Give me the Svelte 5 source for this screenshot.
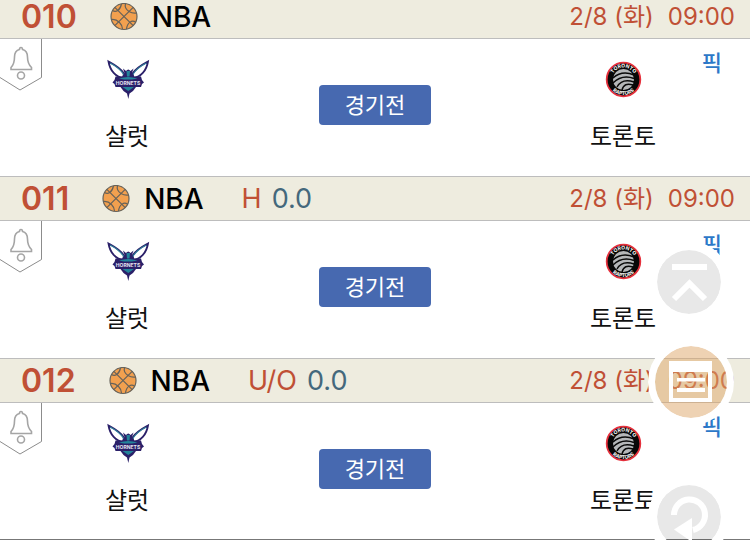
<script>
  const games = [
    { no: "010", type: "", line: "" },
    { no: "011", type: "H", line: "0.0" },
    { no: "012", type: "U/O", line: "0.0" },
  ];

  let alarms = $state({});

  const toggleAlarm = (no) => {
    alarms[no] = !alarms[no];
  };

  const scrollToTop = () => {
    window.scrollTo({ top: 0, behavior: "smooth" });
  };
</script>

<main class="games">
  {#each games as game (game.no)}
    <article class="game">
      <header class="bar">
        <span class="no">{game.no}</span>
        <svg class="ball" viewBox="0 0 28 28" aria-hidden="true">
          <circle cx="14" cy="13.500" r="13" />
          <path d="M4.800 4.300 23.200 22.700M23.200 4.300 4.800 22.700" />
          <path d="M15.500 .8C14.500 4 16 6.500 19 8.500C21.500 10 24 10.500 26.500 10" />
          <path d="M2.500 7.500C6 9.500 10 7.500 11.500 1" />
          <path d="M1.200 16.500C4 16 7 17 9.500 19.500C11.500 21.500 12.500 24 12.500 26" />
          <path d="M25.500 19C22 17 17.500 19 16.500 26" />
        </svg>
        <span class="league">NBA</span>
        {#if game.type}
          <span class="type">{game.type}</span>
          <span class="line">{game.line}</span>
        {/if}
        <time class="when"><span>2/8 (화)</span><span>09:00</span></time>
      </header>

      <div class="body">
        <button
          type="button"
          class="alarm"
          aria-label="알림"
          aria-pressed={!!alarms[game.no]}
          onclick={() => toggleAlarm(game.no)}
        >
          <svg viewBox="0 0 42 52" aria-hidden="true">
            <path class="tag" d="M41.500 0V38.500L20 51 0 38.500" />
            <path
              class="bell"
              d="M21 8.500C20 8.500 19.500 9.500 19.500 10.500C15.500 11.500 14.500 14.500 14.500 18C14.500 24 13.500 26 11 28.500V30.500H31.500V28.500C29 26 27.500 24 27.500 18C27.500 14.500 26.500 11.500 22.500 10.500C22.500 9.500 22 8.500 21 8.500Z"
            />
            <circle class="bell" cx="21" cy="36.500" r="3.500" />
          </svg>
        </button>

        <div class="team">
          <svg class="logo" viewBox="0 0 42 42" aria-hidden="true">
            <path class="wing" d="M2.500 3.500C8 6.500 14 9.500 18 15.500L17 20C10 19 4 13 2.500 3.500ZM42 3.500C36.500 6.500 30.500 9.500 26.500 15.500L27.500 20C34.500 19 40.500 13 42 3.500Z" />
            <path class="vein" d="M4 5C10 8 15 12 18 17M40.500 5C34.500 8 29.500 12 26.500 17" />
            <path class="navy" d="M17 10.500 20 13Q22.300 10 24.500 13L27.500 10.500 26 15 28 18.500H35L36 22 38 24.500 36 26 35 29H30L27 33 23.500 35.500 22.300 41 21 35.500 17.500 33 14.500 29H9.500L8.500 26 6.500 24.500 8.500 22 9.500 18.500H16.500L18.500 15Z" />
            <path class="teal" d="M20.500 13H24L23.500 18.500H21ZM13 20.500Q22 17.500 31.500 20.500L26 21.500H18ZM16.500 29H28L22.300 33Z" />
            <text class="hornets" x="22" y="27" text-anchor="middle">HORNETS</text>
          </svg>
          <span>샬럿</span>
        </div>

        <div class="state"><span>경기전</span></div>

        <div class="team">
          <svg class="logo" viewBox="0 0 42 42" aria-hidden="true">
            <defs>
              <path id="top-{game.no}" d="M9.500 21.500A12 12 0 0 1 33.500 21.500" />
              <path id="bottom-{game.no}" d="M6 21.500A15.500 15.500 0 0 0 37 21.500" />
            </defs>
            <circle cx="21.500" cy="21.500" r="16.800" fill="#080808" stroke="#e5303c" stroke-width="1.800" />
            <circle cx="21.500" cy="21.500" r="10.500" fill="#b5b7b9" />
            <path
              d="M11 20Q20 12 32 17M11 25Q20 16 32 20.500M15 29Q20 20 32 24M20 32Q22 24 31 27"
              fill="none"
              stroke="#080808"
              stroke-width="1.400"
            />
            <text class="raptors"><textPath href="#top-{game.no}" startOffset="50%" text-anchor="middle">TORONTO</textPath></text>
            <text class="raptors"><textPath href="#bottom-{game.no}" startOffset="50%" text-anchor="middle">RAPTORS</textPath></text>
          </svg>
          <span>토론토</span>
        </div>

        <a class="pick" href="#pick-{game.no}">픽</a>
      </div>
    </article>
  {/each}
</main>

<nav class="floating">
  <button type="button" class="round" aria-label="맨 위로" onclick={scrollToTop}>
    <svg viewBox="1 1 64 64" aria-hidden="true">
      <path d="M16 18H51" />
      <path d="M18 50 33.500 34.500 49 50" />
    </svg>
  </button>
  <button type="button" class="round menu" aria-label="메뉴">
    <svg viewBox="0 0 72 72" aria-hidden="true">
      <path class="fill" fill-rule="evenodd" d="M14 15H57V56H14ZM18 26V52H53V26Z" />
      <path class="fill" d="M22 32H50V35.500H22ZM22 42H50V46H22Z" />
    </svg>
  </button>
  <button type="button" class="round refresh" aria-label="새로고침">
    <svg viewBox="1 1 64 64" aria-hidden="true">
      <path d="M18 31A15.500 15.500 0 1 1 37 46" />
      <path class="fill" d="M36 34V58L18 45.500Z" />
    </svg>
  </button>
</nav>

<style>
  :global(body) {
    margin: 0;
    background: #fff;
    overflow: hidden;
    font-family: Inter, "Noto Sans CJK KR", sans-serif;
  }

  .games {
    margin-top: -6px;
    border-bottom: 1px solid #777;
  }

  .bar {
    display: flex;
    align-items: center;
    box-sizing: border-box;
    height: 45px;
    padding: 0 15px 0 21px;
    border-top: 1px solid #bdbdbd;
    border-bottom: 1px solid #bdbdbd;
    background: #eeecdf;
    line-height: 30px;
    white-space: nowrap;
  }

  .no {
    color: #c05035;
    font-size: 32px;
    font-weight: 600;
  }

  .ball {
    width: 28px;
    height: 28px;
    margin: 0 14px 0 33px;
    fill: none;
    stroke: #66625a;
    stroke-width: 1.2;
  }

  .ball circle {
    fill: #f2a04f;
  }

  .league {
    color: #000;
    font-size: 28px;
    font-weight: 500;
  }

  .type {
    margin: 0 10px 0 38px;
    color: #c05035;
    font-size: 27px;
  }

  .line {
    color: #44687c;
    font-size: 27px;
  }

  .when {
    display: flex;
    gap: 14px;
    margin-left: auto;
    color: #c05035;
    font-size: 24px;
  }

  .body {
    position: relative;
    display: grid;
    grid-template-columns: repeat(3, 1fr);
    box-sizing: border-box;
    height: 137px;
    padding: 0 3px;
  }

  .game:last-child .body {
    height: 136px;
  }

  .alarm {
    position: absolute;
    top: 0;
    left: 0;
    padding: 0;
    border: 0;
    background: none;
    cursor: pointer;
  }

  .alarm svg {
    display: block;
    width: 42px;
    height: 52px;
    fill: none;
  }

  .tag {
    stroke: #8c8c8c;
  }

  .bell {
    stroke: #a5a5a5;
    stroke-width: 1.6;
  }

  .team {
    display: flex;
    flex-direction: column;
    align-items: center;
    gap: 19px;
    padding-top: 19px;
    color: #111;
    font-size: 24px;
    line-height: 36px;
  }

  .logo {
    width: 42px;
    height: 42px;
    overflow: visible;
  }

  .wing {
    fill: #fff;
    stroke: #2b2069;
    stroke-width: 1.8;
  }

  .vein {
    fill: none;
    stroke: #31819c;
    stroke-width: 1.2;
  }

  .navy {
    fill: #2b2069;
  }

  .teal {
    fill: #23849a;
  }

  .hornets {
    fill: #e6e6f2;
    font-size: 5px;
    font-weight: 700;
  }

  .raptors {
    fill: #fff;
    font-size: 5px;
    font-weight: 700;
  }

  .state {
    display: flex;
    justify-content: center;
    padding-top: 46px;
  }

  .state span {
    box-sizing: border-box;
    width: 112px;
    height: 40px;
    border-radius: 4px;
    background: #4769b0;
    color: #fff;
    font-size: 22px;
    line-height: 40px;
    text-align: center;
  }

  .pick {
    position: absolute;
    top: 8px;
    right: 28px;
    color: #2d78c8;
    font-size: 22px;
    font-weight: 500;
    line-height: 32px;
    text-decoration: none;
  }

  .floating {
    position: fixed;
    top: 241px;
    right: 16px;
    display: flex;
    flex-direction: column;
    align-items: center;
  }

  .round {
    box-sizing: border-box;
    width: 82px;
    height: 82px;
    margin-right: 4px;
    padding: 0;
    border: 9px solid #fff;
    border-radius: 50%;
    background: rgba(0, 0, 0, 0.09);
    background-clip: padding-box;
    cursor: pointer;
  }

  .round svg {
    display: block;
    width: 100%;
    fill: none;
    stroke: #fff;
    stroke-width: 6;
  }

  .round .fill {
    fill: #fff;
    stroke: none;
  }

  .menu {
    width: 86px;
    height: 86px;
    margin: 16px 0 51px;
    border-width: 7px;
    background-color: rgba(221, 166, 103, 0.5);
  }
</style>
